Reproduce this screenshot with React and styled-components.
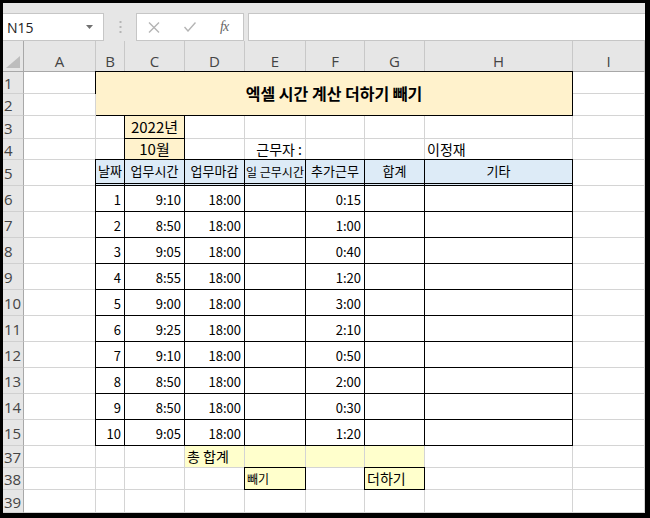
import React from 'react'
import styled, { createGlobalStyle } from 'styled-components'

const GlobalStyle = createGlobalStyle`
  html, body {
    margin: 0;
    padding: 0;
    background: #000;
  }
  body {
    font-family: "Noto Sans CJK KR", "Noto Sans", sans-serif;
  }
`

const Frame = styled.div`
  width: 650px;
  height: 518px;
  box-sizing: border-box;
  border-style: solid;
  border-color: #000;
  border-width: 3px 5px 5px 3px;
  background: #fff;
  overflow: hidden;
  display: flex;
  flex-direction: column;
`

const Toolbar = styled.div`
  height: 38px;
  flex: none;
  background: #e6e6e6;
  display: flex;
  align-items: flex-end;
`

const NameBox = styled.div`
  width: 101px;
  height: 28px;
  box-sizing: border-box;
  background: #fff;
  border: 1px solid #c6c6c6;
  border-left: none;
  display: flex;
  align-items: center;
  justify-content: space-between;
  padding: 0 10px 0 4px;
  font: 14px "Open Sans", sans-serif;
  color: #222;
`

const Grip = styled.div`
  width: 32px;
  height: 28px;
  display: flex;
  align-items: center;
  justify-content: center;
`

const FxBox = styled.div`
  width: 108px;
  height: 28px;
  box-sizing: border-box;
  background: #fff;
  border: 1px solid #c6c6c6;
  display: flex;
  align-items: center;
  gap: 24px;
  padding-left: 11px;
`

const FxLabel = styled.span`
  font: italic 14px "Liberation Serif", serif;
  color: #666;
  letter-spacing: -1px;
`

const FormulaInput = styled.div`
  flex: 1;
  height: 28px;
  margin-left: 4px;
  box-sizing: border-box;
  background: #fff;
  border: 1px solid #c6c6c6;
  border-right: none;
`

const Sheet = styled.div`
  display: grid;
  grid-template-columns: 21px 72px 29px 60px 60px 61px 59px 60px 148px 72px;
  grid-template-rows: 31px 22px 22px 23px 21px 26px repeat(10, 26px) 22px 22px 23px;
`

const Corner = styled.div`
  box-sizing: border-box;
  background: #e6e6e6;
  border-right: 1px solid #a8a8a8;
  border-bottom: 1px solid #a8a8a8;
`

const ColHead = styled.div`
  box-sizing: border-box;
  background: #e6e6e6;
  border-right: 1px solid #c8c8c8;
  border-bottom: 1px solid #a8a8a8;
  display: flex;
  align-items: flex-end;
  justify-content: center;
  padding-bottom: 2px;
  font: 15px/15px "Open Sans", sans-serif;
  color: #444;
`

const RowHead = styled.div`
  box-sizing: border-box;
  background: #e6e6e6;
  border-right: 1px solid #a8a8a8;
  border-bottom: 1px solid #d0d0d0;
  display: flex;
  align-items: center;
  padding-left: 1px;
  padding-top: 2px;
  font: 15px/15px "Open Sans", sans-serif;
  color: #444;
  white-space: nowrap;
`

const justify = { left: 'flex-start', right: 'flex-end', center: 'center' }

const Cell = styled.div`
  box-sizing: border-box;
  grid-column: span ${p => p.$span || 1};
  grid-row: span ${p => p.$rows || 1};
  background: ${p => p.$fill || '#fff'};
  border-right: 1px solid ${p => (p.$boxed ? '#000' : '#d4d4d4')};
  border-bottom: ${p => (p.$double ? '3px double #000' : `1px solid ${p.$boxed ? '#000' : '#d4d4d4'}`)};
  box-shadow: ${p => (p.$boxed ? '-1px 0 0 #000, 0 -1px 0 #000, -1px -1px 0 #000' : 'none')};
  display: flex;
  align-items: ${p => (p.$bottom ? 'flex-end' : 'center')};
  justify-content: ${p => justify[p.$align || 'center']};
  padding: 0 ${p => (p.$align === 'right' ? 3 : 2)}px ${p => (p.$bottom ? 2 : 0)}px;
  font-size: ${p => p.$size || 13}px;
  font-weight: ${p => (p.$bold ? 700 : 400)};
  line-height: 1.3;
  color: #000;
  white-space: nowrap;
  overflow: hidden;
`

const columns = ['A', 'B', 'C', 'D', 'E', 'F', 'G', 'H', 'I']

const days = [
  ['1', '9:10', '0:15'],
  ['2', '8:50', '1:00'],
  ['3', '9:05', '0:40'],
  ['4', '8:55', '1:20'],
  ['5', '9:00', '3:00'],
  ['6', '9:25', '2:10'],
  ['7', '9:10', '0:50'],
  ['8', '8:50', '2:00'],
  ['9', '8:50', '0:30'],
  ['10', '9:05', '1:20'],
]

const headers = ['날짜', '업무시간', '업무마감', '일 근무시간', '추가근무', '합계', '기타']

const CROSS = '#b4b4b4'

function Blank({ count }) {
  return Array.from({ length: count }, (_, i) => <Cell key={i} />)
}

export default function App() {
  return (
    <Frame>
      <GlobalStyle />
      <Toolbar>
        <NameBox>
          <span>N15</span>
          <svg width="7" height="4" viewBox="0 0 7 4">
            <path d="M0 0 L7 0 L3.5 4 Z" fill="#707070" />
          </svg>
        </NameBox>
        <Grip>
          <svg width="3" height="12" viewBox="0 0 3 12">
            <rect x="0.5" y="0" width="2" height="2" fill="#b5b5b5" />
            <rect x="0.5" y="5" width="2" height="2" fill="#b5b5b5" />
            <rect x="0.5" y="10" width="2" height="2" fill="#b5b5b5" />
          </svg>
        </Grip>
        <FxBox>
          <svg width="12" height="11" viewBox="0 0 12 11">
            <path d="M1 0.5 L11 10.5 M11 0.5 L1 10.5" stroke={CROSS} strokeWidth="1.4" />
          </svg>
          <svg width="12" height="10" viewBox="0 0 12 10">
            <path d="M0.5 5 L4 9 L11.5 0.5" stroke={CROSS} strokeWidth="1.4" fill="none" />
          </svg>
          <FxLabel>fx</FxLabel>
        </FxBox>
        <FormulaInput />
      </Toolbar>

      <Sheet>
        <Corner>
          <svg width="20" height="30" viewBox="0 0 20 30">
            <path d="M17 15 L17 27 L3 27 Z" fill="#bdbdbd" />
          </svg>
        </Corner>
        {columns.map(c => (
          <ColHead key={c}>{c}</ColHead>
        ))}

        <RowHead>1</RowHead>
        <Cell />
        <Cell $span={7} $rows={2} $boxed $fill="#fff2cc" $bold $size={16}>
          엑셀 시간 계산 더하기 빼기
        </Cell>
        <Cell />

        <RowHead>2</RowHead>
        <Cell />
        <Cell />

        <RowHead>3</RowHead>
        <Blank count={2} />
        <Cell $boxed $fill="#fff2cc" $size={15}>2022년</Cell>
        <Blank count={6} />

        <RowHead>4</RowHead>
        <Blank count={2} />
        <Cell $boxed $fill="#fff2cc" $size={15}>10월</Cell>
        <Cell />
        <Cell $align="right" $size={14}>근무자 :</Cell>
        <Blank count={2} />
        <Cell $align="left" $size={14}>이정재</Cell>
        <Cell />

        <RowHead>5</RowHead>
        <Cell />
        {headers.map(h => (
          <Cell key={h} $boxed $double $fill="#ddebf7" $size={h.length > 4 ? 12 : 13}>
            {h}
          </Cell>
        ))}
        <Cell />

        {days.map(([day, start, extra], i) => (
          <React.Fragment key={day}>
            <RowHead>{i + 6}</RowHead>
            <Cell />
            <Cell $boxed $bottom $align="right">{day}</Cell>
            <Cell $boxed $bottom $align="right">{start}</Cell>
            <Cell $boxed $bottom $align="right">18:00</Cell>
            <Cell $boxed />
            <Cell $boxed $bottom $align="right">{extra}</Cell>
            <Cell $boxed />
            <Cell $boxed />
            <Cell />
          </React.Fragment>
        ))}

        <RowHead>37</RowHead>
        <Blank count={3} />
        <Cell $fill="#ffffcc" $align="left" $size={14}>총 합계</Cell>
        <Cell $fill="#ffffcc" />
        <Cell $fill="#ffffcc" />
        <Cell $fill="#ffffcc" />
        <Blank count={2} />

        <RowHead>38</RowHead>
        <Blank count={4} />
        <Cell $boxed $fill="#ffffcc" $align="left" $size={12}>빼기</Cell>
        <Cell />
        <Cell $boxed $fill="#ffffcc" $align="left" $size={14}>더하기</Cell>
        <Blank count={2} />

        <RowHead>39</RowHead>
        <Blank count={9} />
      </Sheet>
    </Frame>
  )
}
